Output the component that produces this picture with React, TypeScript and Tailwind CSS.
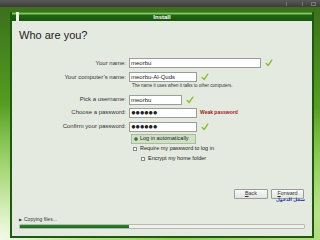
import React from "react";

const font = { fontFamily: '"Liberation Sans", Arial, sans-serif' };

function Check() {
  return (
    <svg width="8" height="8" viewBox="0 0 10 10" className="shrink-0">
      <path d="M1.5 5.5 L4 8 L8.5 1.5" fill="none" stroke="#8cbf2a" strokeWidth="1.8" strokeLinecap="round" strokeLinejoin="round" />
    </svg>
  );
}

function Row({ label, value, width, after, dots }: { label: string; value: string; width: string; after?: React.ReactNode; dots?: boolean }) {
  return (
    <div className="flex items-center h-[10px]">
      <div className="w-[110px] text-right pr-[3px] text-[6px] text-[#333]">{label}</div>
      <div className={`${width} h-[10px] bg-white border border-[#9a9e98] flex items-center px-[1px] text-[6px] text-[#222] leading-none`}>
        {dots ? <span className="text-[8px] tracking-[-0.5px]">●●●●●●</span> : value}
      </div>
      <div className="ml-[4px] flex items-center">{after}</div>
    </div>
  );
}

export default function App() {
  return (
    <div
      className="w-[320px] h-[240px] overflow-hidden bg-[radial-gradient(ellipse_at_0%_100%,#f4fbe8_0%,rgba(220,240,190,0.6)_18%,transparent_40%),radial-gradient(ellipse_at_100%_90%,#b9e28a_0%,transparent_35%),linear-gradient(to_bottom,#3a6e1a_0%,#4e9420_35%,#6cbc2c_70%,#8fd048_100%)]"
      style={font}
    >
      <div className="h-[7px] bg-[linear-gradient(to_bottom,#5a5a58,#3c3c3a)] flex items-center justify-end gap-[8px] pr-[4px]">
        <div className="w-[4px] h-[4px] border-l border-[#777]" />
        <div className="w-[5px] h-[4px] border-r border-[#777]" />
        <div className="w-[5px] h-[4px] border border-[#777]" />
      </div>
      <div className="ml-[10px] mt-[5px] w-[304px] h-[226px] flex flex-col border-2 border-t-0 border-[#1d5a10] bg-[#e5eae1]">
        <div className="h-[9px] flex items-center justify-center bg-[linear-gradient(to_bottom,#2f7a1c_0%,#8ccf6a_18%,#1f6612_35%,#17560c_100%)] relative">
          <div className="absolute left-[4px] top-0 w-[3px] h-[9px] bg-[#eef4ea]" />
          <span className="text-[6px] font-bold text-white leading-none">Install</span>
        </div>
        <div className="flex-1 flex flex-col px-[7px] pt-[9px]">
          <div className="text-[11px] text-[#222] leading-none">Who are you?</div>
          <div className="mt-[17px] flex flex-col">
            <Row label="Your name:" value="meorbu" width="w-[132px]" after={<Check />} />
            <div className="mt-[4px]">
              <Row label="Your computer’s name:" value="meorbu-Al-Quds" width="w-[68px]" after={<Check />} />
            </div>
            <div className="ml-[113px] mt-[2px] text-[4.5px] text-[#333] leading-none">The name it uses when it talks to other computers.</div>
            <div className="mt-[6px]">
              <Row label="Pick a username:" value="meorbu" width="w-[53px]" after={<Check />} />
            </div>
            <div className="mt-[3px]">
              <Row label="Choose a password:" value="" dots width="w-[68px]" after={<span className="text-[5px] font-bold text-[#a31515] -ml-[1px]">Weak password</span>} />
            </div>
            <div className="mt-[4px]">
              <Row label="Confirm your password:" value="" dots width="w-[68px]" after={<Check />} />
            </div>
            <div className="ml-[112px] mt-[2px] w-[65px] h-[10px] bg-[#cfe0c6] border border-[#a8c09a] flex items-center gap-[2px] px-[2px]">
              <div className="w-[4px] h-[4px] rounded-full bg-[#2d6a1e] border border-[#6b8a60]" />
              <span className="text-[5.5px] text-[#222] leading-none">Log in automatically</span>
            </div>
            <div className="ml-[114px] mt-[1px] h-[9px] flex items-center gap-[3px]">
              <div className="w-[4px] h-[4px] bg-white border border-[#888]" />
              <span className="text-[5.5px] text-[#222] leading-none">Require my password to log in</span>
            </div>
            <div className="ml-[122px] mt-[1px] h-[9px] flex items-center gap-[3px]">
              <div className="w-[4px] h-[4px] bg-white border border-[#888]" />
              <span className="text-[5.5px] text-[#222] leading-none">Encrypt my home folder</span>
            </div>
          </div>
          <div className="mt-[25px] flex justify-end gap-[3px] pr-[1px]">
            <div className="w-[34px] h-[10px] border border-[#9a9e98] rounded-[1px] bg-[linear-gradient(to_bottom,#fafafa,#e2e4e0)] flex items-center justify-center text-[5.5px] text-[#333]">
              <span><span className="underline">B</span>ack</span>
            </div>
            <div className="w-[33px] h-[10px] border border-[#9a9e98] rounded-[1px] bg-[linear-gradient(to_bottom,#fafafa,#e2e4e0)] flex items-center justify-center text-[5.5px] text-[#333]">
              <span><span className="underline">F</span>orward</span>
            </div>
          </div>
          <div className="flex justify-end -mt-[1px]">
            <span className="text-[4.5px] font-bold text-[#1a2fa0] leading-none" style={{ fontFamily: '"DejaVu Sans", sans-serif' }}>سجل الدخول</span>
          </div>
          <div className="mt-[15px] flex items-center gap-[2px] text-[5px] text-[#333] leading-none">
            <span className="text-[4px]">▶</span>
            <span>Copying files...</span>
          </div>
          <div className="mt-[2px] w-[286px] h-[5px] border border-[#b6bab2] bg-[#eef0ec] rounded-[1px] overflow-hidden">
            <div className="w-[109px] h-full bg-[linear-gradient(to_bottom,#2c8a2a,#17681a)]" />
          </div>
        </div>
      </div>
    </div>
  );
}
